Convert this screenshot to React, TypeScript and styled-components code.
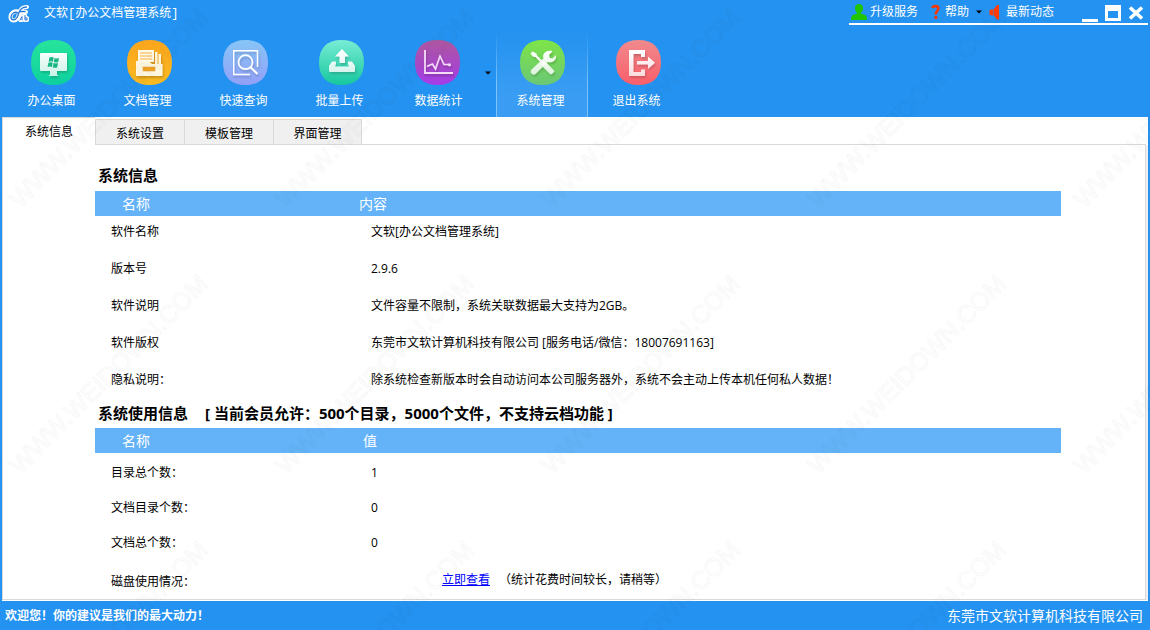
import React, { useState } from 'react';
import styled, { createGlobalStyle } from 'styled-components';

const blue = '#2492f0';
const barBlue = '#64b3f8';
const line = '#d9d9d9';
const uiFont = "'Open Sans', 'Noto Sans CJK SC', sans-serif";
const cjkFont = "'Noto Sans CJK SC', sans-serif";

const GlobalStyle = createGlobalStyle`
  * { box-sizing: border-box; }
  body {
    margin: 0;
    background: ${blue};
    font: 12px/16px ${uiFont};
    color: #000;
  }
  button {
    margin: 0;
    padding: 0;
    border: 0;
    background: none;
    color: inherit;
    font: inherit;
    cursor: pointer;
  }
  svg { display: block; flex: none; }
`;

const Window = styled.div`
  position: relative;
  display: flex;
  flex-direction: column;
  min-height: 100vh;
  overflow: hidden;
`;

const TitleBar = styled.header`
  display: flex;
  justify-content: space-between;
  align-items: flex-start;
  height: 32px;
  padding: 0 2px 0 8px;
  color: #fff;
`;

const Brand = styled.h1`
  display: flex;
  align-items: center;
  gap: 14px;
  height: 28px;
  margin: 0;
  font: 12px/16px 'Liberation Mono', 'Noto Sans CJK SC', monospace;
`;

const TitleTools = styled.div`
  display: flex;
  justify-content: space-between;
  gap: 28px;
  height: 25px;
  padding: 0 4px 0 2px;
  border-bottom: 2px solid #fff;
`;

const QuickLinks = styled.nav`
  display: flex;
  align-items: center;
  gap: 7px;
`;

const QuickButton = styled.button`
  display: flex;
  align-items: center;
  gap: 3px;
  height: 23px;
  white-space: nowrap;
`;

const WindowControls = styled.div`
  display: flex;
  gap: 7px;
  padding-top: 4px;
`;

const Toolbar = styled.nav`
  display: flex;
  gap: 4px;
  height: 85px;
  padding-left: 7px;
  color: #fff;
`;

const ToolGroup = styled.div`
  display: flex;
`;

const ToolButton = styled.button<{ $active?: boolean }>`
  display: flex;
  flex-direction: column;
  align-items: center;
  gap: 7px;
  width: 92px;
  padding-top: 8px;
  font-family: ${cjkFont};
  border: 1px solid transparent;
  border-width: 0 1px;
  ${({ $active }) =>
    $active &&
    `
    background: linear-gradient(${blue}, #3a9df3 75%);
    border-image: linear-gradient(${blue}, #7cc4fb 60%) 1;
    border-width: 0 1px;
  `}
`;

const ToolLabel = styled.span<{ $menu?: boolean }>`
  padding: ${({ $menu }) => ($menu ? '0 0 0 3px' : '0 3px 0 0')};
`;

const MenuArrow = styled.button`
  display: flex;
  align-items: center;
  justify-content: center;
  width: 9px;
  height: 82px;
`;

const Main = styled.main`
  flex: 1;
  display: flex;
  flex-direction: column;
  margin: 0 2px;
  background: #fff;
`;

const TabStrip = styled.div`
  display: flex;
  height: 28px;

  &::after {
    content: '';
    flex: 1;
    margin-right: 2px;
    border-bottom: 1px solid ${line};
  }
`;

const Tab = styled.button<{ $active: boolean }>`
  width: ${({ $active }) => ($active ? 93 : 89)}px;
  font-family: ${cjkFont};
  border: 1px solid ${line};
  ${({ $active }) =>
    $active
      ? `
    padding-bottom: 2px;
    background: #fff;
    border-width: 1px 0 0 1px;
  `
      : `
    margin-top: 2px;
    padding-top: 2px;
    background: #f0f0f0;
    border-width: 1px 0 1px 1px;
    &:last-child { border-right-width: 1px; }
  `}
`;

const Panel = styled.section`
  flex: 1;
  padding: 21px 84px 0 92px;
  margin: 0 2px 1px 0;
  border: 1px solid ${line};
  border-top: 0;
  box-shadow: 2px 0 0 #f0f0f0;
`;

const SectionTitle = styled.h2`
  display: flex;
  gap: 17px;
  margin: 0;
  padding: 0 0 7px 3px;
  font: bold 15px/18px ${uiFont};

  table + & { padding: 3px 0 6px 3px; }
`;

const InfoTable = styled.table<{ $valuePad: number; $row: number; $top: number }>`
  width: 100%;
  border-collapse: collapse;
  table-layout: fixed;

  th {
    height: 25px;
    padding: 0 0 0 27px;
    background: ${barBlue};
    color: #fff;
    font: 14px/20px ${uiFont};
    text-align: left;
  }
  th:first-child { width: 260px; }
  th + th { padding-left: ${({ $valuePad }) => $valuePad}px; }
  td {
    height: ${({ $row }) => $row}px;
    padding: ${({ $top }) => $top}px 0 0 16px;
    vertical-align: top;
  }
`;

const DiskUsage = styled.div`
  display: flex;
  gap: 9px;
  padding: 1px 0 0 71px;
  font-family: ${cjkFont};

  a { color: #00f; }
`;

const DiskLabel = styled.div`
  padding-top: 4px;
`;

const StatusBar = styled.footer`
  display: flex;
  justify-content: space-between;
  align-items: center;
  height: 29px;
  padding: 0 7px 0 5px;
  color: #fff;
`;

const Company = styled.span`
  font-size: 14px;
  line-height: 20px;
`;

const WatermarkLayer = styled.svg`
  position: absolute;
  inset: 0;
  width: 100%;
  height: 100%;
  pointer-events: none;
`;

const Watermark = () => (
  <WatermarkLayer aria-hidden="true">
    <defs>
      <pattern id="mark" x="4" y="-20" width="266" height="266" patternUnits="userSpaceOnUse">
        <text
          transform="translate(16 229) rotate(-45)"
          fontFamily="'Liberation Sans', sans-serif"
          fontSize="25"
          fill="none"
          stroke="#000"
          strokeOpacity="0.030"
        >
          WWW.WEIDOWN.COM
        </text>
      </pattern>
    </defs>
    <rect width="100%" height="100%" fill="url(#mark)" />
  </WatermarkLayer>
);

const Logo = () => (
  <svg width="22" height="20" viewBox="0 0 22 20" fill="none" strokeLinecap="round" strokeLinejoin="round">
    <g stroke="#fff" strokeWidth="4">
      <path d="M11 8C7 6 2.500 9 2.500 13C2.500 17 7 18 9.500 14C11.500 10 11 3 19 3" />
      <path d="M12 8H18" />
      <path d="M12 16L14 12V16M17 11V16H19V14H17" />
    </g>
    <g stroke="#2a78d8" strokeWidth="1.300">
      <path d="M10 9C7 7 3 9.500 3 13C3 16.500 7 17 9 13.500C11 10 11 3 18.500 3" />
      <path d="M12 7.500H17" />
      <path d="M12 16L14 12.500V16M17 11.500V16H19V14H17" strokeWidth="1" />
    </g>
  </svg>
);

const UserIcon = () => (
  <svg width="16" height="16" viewBox="0 0 16 16" fill="#1fc600">
    <path d="M8 0C10.500 0 12 1.800 12 4.200C12 6.200 11 7.800 10 8.600V9.400L14 11C15.500 11.700 16 13 16 16H0C0 13 .5 11.700 2 11L6 9.400V8.600C5 7.800 4 6.200 4 4.200C4 1.800 5.500 0 8 0Z" />
  </svg>
);

const HelpIcon = () => (
  <svg width="17" height="16" viewBox="0 0 17 16">
    <path d="M7.500 4.200C7.800 1.600 13.300 1.200 13.300 4.600C13.300 7 10.800 7 10.800 10.400" fill="none" stroke="#f73600" strokeWidth="2.600" />
    <rect x="9.300" y="12" width="3" height="3" rx="1" fill="#f73600" />
  </svg>
);

const SpeakerIcon = () => (
  <svg width="14" height="16" viewBox="0 0 14 16" fill="#ff3c0a">
    <path d="M10 1V15.500H8L5 11.500H4.500V5.500L8 1ZM1.500 5.500H4V11.500H3L0.500 10.500V6.500Z" />
  </svg>
);

const Caret = () => (
  <svg width="6" height="4" viewBox="0 0 6 4">
    <path d="M0 0.500H6L3 3.500Z" fill="#000" />
  </svg>
);

type Glyph = { from: string; to: string; id: string; children: React.ReactNode };

const Badge = ({ id, from, to, children }: Glyph) => (
  <svg width="45" height="45" viewBox="0 0 45 45">
    <defs>
      <linearGradient id={id} x1="0" y1="0" x2="0" y2="1">
        <stop offset="0" stopColor={from} />
        <stop offset="1" stopColor={to} />
      </linearGradient>
      <linearGradient id={`${id}-ink`} gradientUnits="userSpaceOnUse" x1="0" y1="10" x2="0" y2="36">
        <stop offset="0" stopColor="#fff" />
        <stop offset="1" stopColor="#fff" stopOpacity="0.750" />
      </linearGradient>
      <filter id={`${id}-shade`} x="-20%" y="-20%" width="150%" height="150%">
        <feDropShadow dx="1" dy="2" stdDeviation="1.200" floodOpacity="0.200" />
      </filter>
    </defs>
    <path d="M22.500 0C37 0 45 8 45 22.500S37 45 22.500 45S0 37 0 22.500S8 0 22.500 0Z" fill={`url(#${id})`} />
    <g filter={`url(#${id}-shade)`}>{children}</g>
  </svg>
);

const DesktopIcon = () => (
  <Badge id="desk" from="#27e59b" to="#0dcf9f">
    <path d="M10 13H35Q36 13 36 14V30Q36 31 35 31H26V35H27V36H18V35H19V31H10Q9 31 9 30V14Q9 13 10 13Z" fill="url(#desk-ink)" />
    <path d="M18.500 17.500Q20.500 16.500 22.700 17.500L21.900 21.700Q19.800 20.800 17.600 21.700ZM23.600 17.900Q25.800 18.900 28 17.900L27.200 22.100Q25 23 22.800 22.100ZM17.400 22.700Q19.500 21.800 21.700 22.700L20.900 26.900Q18.700 26 16.600 26.900ZM22.600 23.100Q24.800 24 27 23.100L26.200 27.300Q24 28.300 21.800 27.300Z" fill="#14b583" />
  </Badge>
);

const FolderIcon = () => (
  <Badge id="docs" from="#fba51c" to="#f9ba22">
    <path d="M11 10H27V22H11Z" fill="#fff8e6" />
    <path d="M13 13H25M13 16H25M13 19H25" stroke="#f9b040" />
    <path d="M28 12H30.500V24H28ZM31.500 14H34V25H31.500Z" fill="#fff3d8" />
    <path d="M9 21H21L25 24H35.500V35Q35.500 36 34.500 36H10Q9 36 9 35Z" fill="#fff6e0" />
    <rect x="16" y="27" width="12" height="4" fill="#f0a21d" stroke="#d9a04a" strokeWidth="0.600" />
  </Badge>
);

const SearchIcon = () => (
  <Badge id="find" from="#86c5f6" to="#93a0f8">
    <g fill="none" stroke="#fff" strokeWidth="1.400">
      <path d="M34.500 27V10.700H10.700V34.500H27" />
      <circle cx="22.500" cy="22.200" r="7" strokeWidth="1.700" />
      <path d="M27.500 27.300L34.500 34" strokeWidth="2.200" />
    </g>
  </Badge>
);

const UploadIcon = () => (
  <Badge id="load" from="#78ecd4" to="#16c79e">
    <path d="M23 9L30 16.500H26V23H20.500V16.500H16Z" fill="url(#load-ink)" />
    <path d="M13 21.500H17V24L16 26.500H30L29 24V21.500H33L36 26V31Q36 32 35 32H11Q10 32 10 31V26Z" fill="url(#load-ink)" />
  </Badge>
);

const ChartIcon = () => (
  <Badge id="stat" from="#ad579f" to="#a53be8">
    <path d="M10 10V33H38" fill="none" stroke="#f4dcf8" strokeWidth="1.800" />
    <path d="M12 26.500L15 25L17.500 24L20.500 29L25 16L29 24.500H34" fill="none" stroke="#f4dcf8" strokeWidth="1.600" />
    <circle cx="34.500" cy="24.800" r="1.500" fill="#f4dcf8" />
  </Badge>
);

const ToolsIcon = () => (
  <Badge id="tool" from="#7ee547" to="#6ac776">
    <path d="M10.500 13.500L12.500 11.500L16.500 13.500L17 15.500L24.500 23L26.500 22.800L34.500 31Q33.500 34 30.500 34.500L23 27V25L15.500 17L13 16.700Z" fill="url(#tool-ink)" />
    <path d="M32.500 11.300L29 15L29.800 18L32.500 18.500L36 15C36.800 19.500 33 23.500 27.500 22L15.500 34Q13.500 35.500 11.500 33.500Q10 31.500 11.500 29.500L23.500 18.500C21.500 13.500 27.500 9.500 32.500 11.300Z" fill="url(#tool-ink)" />
  </Badge>
);

const ExitIcon = () => (
  <Badge id="exit" from="#f08a8d" to="#fa5e6a">
    <path d="M13 10H29V17H25V14H17.500V32H25V29.500H29V36H13Z" fill="url(#exit-ink)" />
    <path d="M21 21H32V16.500L39 22.800L32 29V24.500H21Z" fill="url(#exit-ink)" />
  </Badge>
);

const tools = [
  { label: '办公桌面', Icon: DesktopIcon },
  { label: '文档管理', Icon: FolderIcon },
  { label: '快速查询', Icon: SearchIcon },
  { label: '批量上传', Icon: UploadIcon },
  { label: '数据统计', Icon: ChartIcon, menu: true },
  { label: '系统管理', Icon: ToolsIcon },
  { label: '退出系统', Icon: ExitIcon },
];

const tabs = ['系统信息', '系统设置', '模板管理', '界面管理'];

const systemInfo = [
  ['软件名称', '文软[办公文档管理系统]'],
  ['版本号', '2.9.6'],
  ['软件说明', '文件容量不限制，系统关联数据最大支持为2GB。'],
  ['软件版权', '东莞市文软计算机科技有限公司 [服务电话/微信：18007691163]'],
  ['隐私说明：', '除系统检查新版本时会自动访问本公司服务器外，系统不会主动上传本机任何私人数据！'],
];

const usageInfo = [
  ['目录总个数：', '1'],
  ['文档目录个数：', '0'],
  ['文档总个数：', '0'],
];

export default function App() {
  const [tool, setTool] = useState('系统管理');
  const [tab, setTab] = useState('系统信息');

  return (
    <Window>
      <GlobalStyle />
      <TitleBar>
        <Brand>
          <Logo />
          文软[办公文档管理系统]
        </Brand>
        <TitleTools>
          <QuickLinks>
            <QuickButton><UserIcon />升级服务</QuickButton>
            <QuickButton><HelpIcon />帮助</QuickButton>
            <QuickButton aria-label="帮助菜单"><Caret /></QuickButton>
            <QuickButton><SpeakerIcon />最新动态</QuickButton>
          </QuickLinks>
          <WindowControls>
            <button aria-label="最小化">
              <svg width="16" height="17" viewBox="0 0 16 17"><path d="M0 14H16V17H0Z" fill="#fff" /></svg>
            </button>
            <button aria-label="最大化">
              <svg width="16" height="17" viewBox="0 0 16 17"><path d="M0 0H16V16H0ZM3 6V13H13V6Z" fill="#fff" fillRule="evenodd" /></svg>
            </button>
            <button aria-label="关闭">
              <svg width="16" height="17" viewBox="0 0 16 17"><path d="M2 2.500L14 13.500M14 2.500L2 13.500" stroke="#fff" strokeWidth="3.600" /></svg>
            </button>
          </WindowControls>
        </TitleTools>
      </TitleBar>

      <Toolbar>
        {tools.map(({ label, Icon, menu }) => (
          <ToolGroup key={label}>
            <ToolButton $active={tool === label} onClick={() => setTool(label)}>
              <Icon />
              <ToolLabel $menu={menu}>{label}</ToolLabel>
            </ToolButton>
            {menu && <MenuArrow aria-label={`${label}菜单`}><Caret /></MenuArrow>}
          </ToolGroup>
        ))}
      </Toolbar>

      <Main>
        <TabStrip role="tablist">
          {tabs.map((name) => (
            <Tab key={name} role="tab" aria-selected={tab === name} $active={tab === name} onClick={() => setTab(name)}>
              {name}
            </Tab>
          ))}
        </TabStrip>
        <Panel>
          <SectionTitle>系统信息</SectionTitle>
          <InfoTable $valuePad={4} $row={37} $top={8}>
            <thead>
              <tr><th>名称</th><th>内容</th></tr>
            </thead>
            <tbody>
              {systemInfo.map(([name, value]) => (
                <tr key={name}><td>{name}</td><td>{value}</td></tr>
              ))}
            </tbody>
          </InfoTable>
          <SectionTitle>
            <span>系统使用信息</span>
            <span>[ 当前会员允许：500个目录，5000个文件，不支持云档功能 ]</span>
          </SectionTitle>
          <InfoTable $valuePad={8} $row={35} $top={12}>
            <thead>
              <tr><th>名称</th><th>值</th></tr>
            </thead>
            <tbody>
              {usageInfo.map(([name, value]) => (
                <tr key={name}><td>{name}</td><td>{value}</td></tr>
              ))}
              <tr>
                <td><DiskLabel>磁盘使用情况：</DiskLabel></td>
                <td>
                  <DiskUsage>
                    <a href="#disk">立即查看</a>
                    <span>（统计花费时间较长，请稍等）</span>
                  </DiskUsage>
                </td>
              </tr>
            </tbody>
          </InfoTable>
        </Panel>
      </Main>

      <StatusBar>
        <strong>欢迎您！你的建议是我们的最大动力！</strong>
        <Company>东莞市文软计算机科技有限公司</Company>
      </StatusBar>
      <Watermark />
    </Window>
  );
}
